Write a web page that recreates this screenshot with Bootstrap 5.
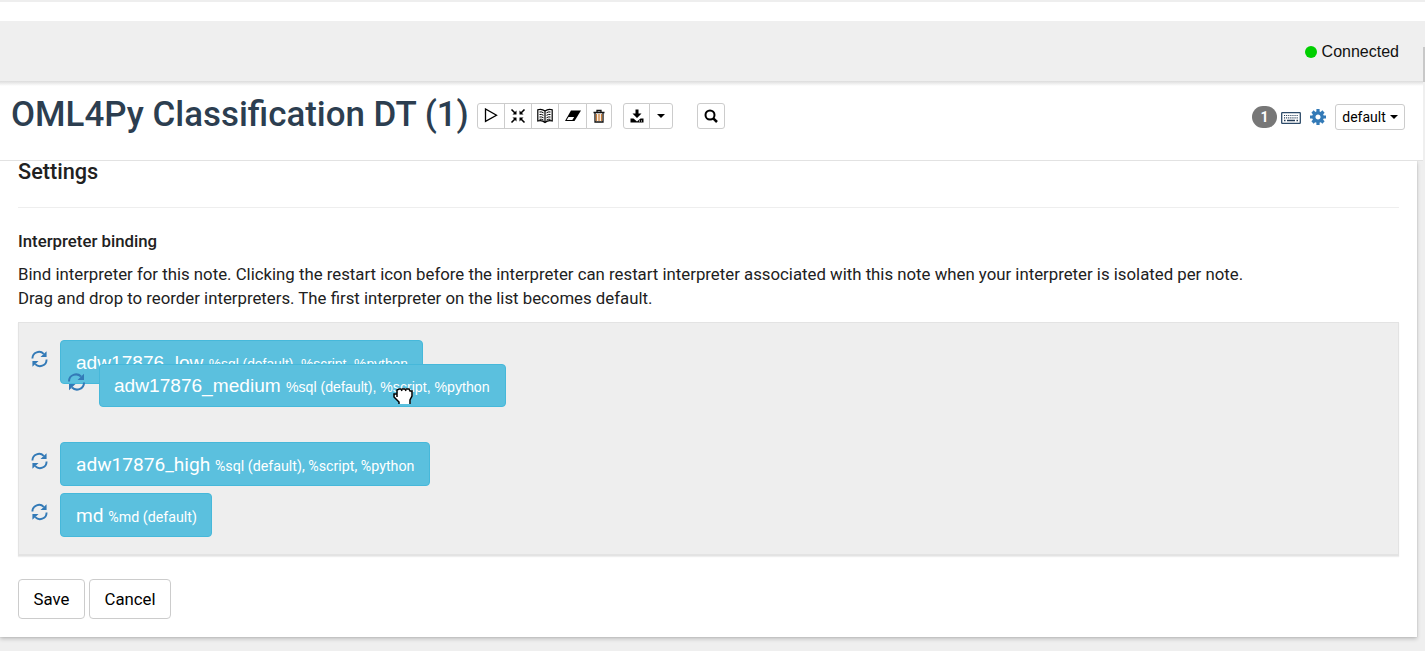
<!DOCTYPE html>
<html lang="en">
<head>
<meta charset="utf-8">
<title>OML4Py Classification DT (1)</title>
<link href="https://cdn.jsdelivr.net/npm/bootstrap@5.3.0/dist/css/bootstrap.min.css" rel="stylesheet">
<style>
body{background:#efefef;font-family:Roboto,"Liberation Sans",sans-serif;font-size:16.8px;color:#212121;height:651px;overflow:hidden}
svg{display:block}
.topline{height:21px;border-top:2px solid #eee}
.statusbar{height:60px;background:#efefef;padding:2px 26px 0 0;font:16px "Liberation Sans",sans-serif;color:#111}
.dot{width:12px;height:12px;background:#00cf00;margin-right:5px}
.thumb{right:0;top:47px;width:2px;height:35px;background:#c8c8c8;z-index:3}
.notehead{height:80px;width:1423px;border-bottom:1px solid #e2e2e2;padding:0 18px 0 11px;background:linear-gradient(#dcdcdc,#fff 5px)}
.notehead h1{font-size:34.9px;font-weight:500;color:#2c3e50;line-height:40px;width:466px;margin:14px 0 0;white-space:nowrap}
.tool{height:26px;border:1px solid #ccc;background:#fff;color:#000;border-radius:3px;padding:0;display:flex;align-items:center;justify-content:center;font-size:14px}
.tools{margin-top:22px;height:26px}
.right-tools{margin-top:23px;height:26px}
.note-count{width:25px;height:22px;background:#777;border-radius:11px;font-size:14px;line-height:22px;padding:0}
.settings{width:1417px;height:476px;padding:0 18px;box-shadow:0 2px 4px rgba(0,0,0,.2),0 0 1px rgba(0,0,0,.2);clip-path:inset(0 -8px -8px 0)}
.settings h4{font-size:21.7px;line-height:22px;font-weight:500;margin:0;height:47px;border-bottom:1px solid #eee}
.settings h5{font-size:16.8px;font-weight:500;line-height:20px;margin:23px 0 11px}
.settings p{line-height:24px;margin:0 0 12px;white-space:nowrap}
.bindings{height:234px;background:#eee;border:1px solid #e3e3e3;border-bottom-width:2px;padding:17px 0 0 12px;box-shadow:0 1px 1px #eee}
.bind-row{height:44px;margin-bottom:7px}
.bind-row.spaced{margin-bottom:58px}
.bind-row>svg{margin-right:12px;margin-top:-6px}
.interp{height:44px;background:#5bc0de;border:1px solid #46b8da;border-radius:4px;color:#fff;font-size:19.1px;line-height:44px;padding:0 0 0 15px;text-align:left;white-space:nowrap}
.interp small{font-size:14.25px}
.arial{font-family:"Liberation Sans",sans-serif}
.bind-row .arial small{font-size:13.85px}
.dragged{left:67px;top:364px;z-index:2}
.dragged .interp{height:43px;line-height:41px;padding-left:14px}
.dragged .interp small{font-size:14.15px}
.dragged>svg{margin-right:13px;margin-top:-7px}
.grab{left:393px;top:387px;z-index:4}
.action{height:40px;border:1px solid #ccc;border-radius:4px;background:#fff;color:#000;font-size:16.8px;padding:1px 0 0}
</style>
</head>
<body>
<svg width="0" height="0" class="position-absolute">
<symbol id="restart" viewBox="0 0 18 18"><g fill="none" stroke="#337ab7" stroke-width="2"><path d="M1.500 8.500C1.500 1.500 9.500-.5 13.500 3.500M16.500 9.500C16.500 16.500 8.500 18.500 4.500 14.500"/></g><path fill="#337ab7" d="M16.500.800v6.200h-6.500zM1.500 17.200v-6.200h6.500z"/></symbol>
</svg>
<div class="topline bg-white"></div>
<div class="statusbar d-flex align-items-center justify-content-end"><span class="dot rounded-circle"></span>Connected</div>
<div class="thumb position-absolute"></div>
<header class="notehead d-flex align-items-start justify-content-between">
<div class="d-flex">
<h1>OML4Py Classification DT (1)</h1>
<div class="tools d-flex">
<div class="btn-group">
<button class="btn tool" style="width:28px"><svg width="14" height="16"><path d="M1.500 1v12.400l11-6.200z" fill="none" stroke="#000" stroke-width="1.300"/></svg></button>
<button class="btn tool" style="width:28px"><svg width="16" height="17"><path d="M1.500 1.500l4 4M14.500 1.500l-4 4M1.500 14.500l4-4M14.500 14.500l-4-4" stroke="#000" stroke-width="1.600"/><path d="M6.500 2.500v4h-4zM9.500 2.500v4h4zM6.500 13.500v-4h-4zM9.500 13.500v-4h4z"/></svg></button>
<button class="btn tool" style="width:28px"><svg width="16" height="17"><path d="M8 3C5.500 1 3 1 .8 1.700v11.300c2.500-.7 5-.4 7.200 1.500 2.200-1.900 4.700-2.200 7.200-1.500V1.700C13 1 10.500 1 8 3zv11.500" fill="none" stroke="#000" stroke-width="1.200"/><path d="M2.500 4q2-.5 4 .8M2.500 6.500q2-.5 4 .8M2.500 9q2-.5 4 .8M2.500 11.300q2-.5 4 .8M13.500 4q-2-.5-4 .8M13.500 6.500q-2-.5-4 .8M13.500 9q-2-.5-4 .8M13.500 11.300q-2-.5-4 .8" fill="none" stroke="#000" stroke-width="1"/></svg></button>
<button class="btn tool" style="width:29px"><svg width="16" height="14"><path d="M6 1.500h10l-6.500 10.500H0z" fill="#000"/><path d="M3.500 8h5.700l-1.900 3H1.700z" fill="#fff"/></svg></button>
<button class="btn tool" style="width:26px"><svg width="12" height="14"><path d="M.5 3.500h11M4 3V1.500h4V3M2 3v10h8V3" fill="none" stroke="#111" stroke-width="1.300"/><path d="M3.500 5v7M6 5v7M8.500 5v7" stroke="#c87c36" stroke-width="1.300"/></svg></button>
</div>
<div class="btn-group" style="margin-left:11px">
<button class="btn tool" style="width:27px"><svg width="14" height="15"><path d="M5.500 .5h3v4h3L7 9 2.500 4.500h3zM.5 9.500h3L7 12.500l3.500-3h3v4H.5z"/><path d="M9 12h1M11 12h1" stroke="#fff"/></svg></button>
<button class="btn tool" style="width:24px"><svg width="8" height="4"><path d="M0 0h8L4 4z"/></svg></button>
</div>
<button class="btn tool" style="width:28px;margin-left:24px"><svg width="14" height="14"><circle cx="6" cy="6" r="4.500" fill="none" stroke="#000" stroke-width="2"/><path d="M9.300 9.300l3.700 3.700" stroke="#000" stroke-width="2.500"/></svg></button>
</div>
</div>
<div class="right-tools d-flex align-items-center">
<span class="badge note-count">1</span>
<svg width="20" height="12" style="margin:2px 9px 0 4px"><rect x=".7" y=".7" width="18.600" height="10.600" rx=".6" fill="#fff" stroke="#2c4a68" stroke-width="1.300"/><path d="M3 3.500h14M3 5.800h14" stroke="#233b55" stroke-width="1.200" stroke-dasharray="1.100 1"/><path d="M3 8.500h1.500M6 8.500h8M15.500 8.500h1.500" stroke="#233b55" stroke-width="1.400"/></svg>
<svg width="16" height="16" viewBox="-8 -8 16 16" style="margin-right:9px"><circle r="4.200" fill="none" stroke="#337ab7" stroke-width="3.300"/><path d="M0-8V-5M0 8V5M-8 0H-5M8 0H5M-5.500-5.500l2 2M5.500-5.500l-2 2M-5.500 5.500l2-2M5.500 5.500l-2-2" stroke="#337ab7" stroke-width="3.200"/></svg>
<button class="btn tool" style="width:70px">default<svg width="8" height="4" style="margin-left:4px"><path d="M0 0h8L4 4z"/></svg></button>
</div>
</header>
<main class="settings bg-white">
<h4>Settings</h4>
<h5>Interpreter binding</h5>
<p>Bind interpreter for this note. Clicking the restart icon before the interpreter can restart interpreter associated with this note when your interpreter is isolated per note.<br>Drag and drop to reorder interpreters. The first interpreter on the list becomes default.</p>
<div class="bindings">
<div class="bind-row spaced d-flex align-items-center"><svg width="17" height="18"><use href="#restart"/></svg><button class="btn interp arial" style="width:363px">adw17876_low <small>%sql (default), %script, %python</small></button></div>
<div class="bind-row d-flex align-items-center"><svg width="17" height="18"><use href="#restart"/></svg><button class="btn interp" style="width:370px">adw17876_high <small>%sql (default), %script, %python</small></button></div>
<div class="bind-row d-flex align-items-center"><svg width="17" height="18"><use href="#restart"/></svg><button class="btn interp" style="width:152px">md <small>%md (default)</small></button></div>
</div>
<div class="d-flex gap-1" style="margin-top:23px"><button class="btn action" style="width:67px">Save</button><button class="btn action" style="width:82px">Cancel</button></div>
</main>
<div class="dragged position-absolute d-flex align-items-center"><svg width="19" height="18"><use href="#restart"/></svg><button class="btn interp arial" style="width:407px">adw17876_medium <small>%sql (default), %script, %python</small></button></div>
<svg class="grab position-absolute" width="21" height="18"><path d="M6 17v-2L1.500 10V7l3-1V3l3-2 2 1 3-1 2 1 3 0 2 2v5l-2 4v4" fill="#fff"/><path d="M6 17v-2L3 12 1 10V7h3v3M4 7V3l2-1h2l1 2M9 2h3l1 2M13 2h3l1 2h2v5l-2 4v4" fill="none" stroke="#000" stroke-width="1.500"/></svg>
<script src="https://cdn.jsdelivr.net/npm/bootstrap@5.3.0/dist/js/bootstrap.bundle.min.js"></script>
</body>
</html>
